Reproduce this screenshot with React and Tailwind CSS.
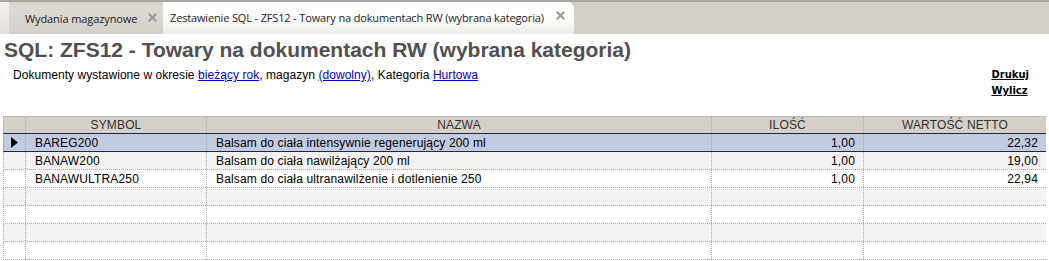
import React from "react";

const rows = [
  { s: "BAREG200", n: "Balsam do ciała intensywnie regenerujący 200 ml", q: "1,00", v: "22,32" },
  { s: "BANAW200", n: "Balsam do ciała nawilżający 200 ml", q: "1,00", v: "19,00" },
  { s: "BANAWULTRA250", n: "Balsam do ciała ultranawilżenie i dotlenienie 250", q: "1,00", v: "22,94" },
  null,
  null,
  null,
  null,
];

function Cell({ w, children, right, grow, className = "" }) {
  return (
    <div
      className={`h-full border-r border-dotted border-[#a8a8a8] flex items-center overflow-hidden whitespace-nowrap ${
        right ? "justify-end pr-[8px]" : "pl-[9px]"
      } ${grow ? "flex-1" : ""} ${className}`}
      style={w ? { width: w } : undefined}
    >
      {children}
    </div>
  );
}

function CloseX({ left }) {
  return (
    <svg className="absolute top-[9px]" style={{ left }} width="9" height="9" viewBox="0 0 9 9">
      <path d="M1.5 1.5 L7.5 7.5 M7.5 1.5 L1.5 7.5" stroke="#9a9a9a" strokeWidth="2" strokeLinecap="square" />
    </svg>
  );
}

export default function App() {
  return (
    <div className="w-[1049px] h-[261px] bg-white overflow-hidden relative">
      {/* Tab bar */}
      <div className="h-[34px] flex bg-[#d4d0c8] border-t-[2px] border-[#a9a7a2]" style={{ fontFamily: "'Open Sans', sans-serif" }}>
        <div className="w-[9px] bg-gradient-to-b from-[#f2f1ee] to-[#e4e2dd]" />
        <div className="w-[154px] mt-[2px] bg-gradient-to-b from-[#dedbd5] to-[#d3d0c9] flex items-center relative text-[11px] text-[#1e1e1e]">
          <span className="ml-[16px] tracking-[-0.1px]">Wydania magazynowe</span>
          <CloseX left={139} />
        </div>
        <div className="w-[411px] bg-gradient-to-b from-[#ffffff] via-[#fdfdfd] to-[#ecebe8] rounded-tr-[6px] flex items-center relative text-[11px] text-[#1e1e1e]">
          <span className="ml-[7px] tracking-[-0.15px]">Zestawienie SQL - ZFS12 - Towary na dokumentach RW (wybrana kategoria)</span>
          <CloseX left={393} />
        </div>
        <div className="flex-1 mt-[3px] bg-[#d4d0c8]" />
      </div>

      {/* Title */}
      <div className="pl-[4px] pt-[4px] text-[21px] leading-[24px] font-bold text-[#505050]" style={{ fontFamily: "'Liberation Sans', Arial, sans-serif" }}>
        SQL: ZFS12 - Towary na dokumentach RW (wybrana kategoria)
      </div>

      <div className="flex justify-between items-start mt-[6px]">
        <div className="pl-[13px] text-[12px] leading-[14px] text-black tracking-[0.05px]" style={{ fontFamily: "'Liberation Sans', Arial, sans-serif" }}>
          Dokumenty wystawione w okresie <span className="text-[#0000cc] underline">bieżący rok</span>, magazyn{" "}
          <span className="text-[#0000cc] underline">(dowolny)</span>, Kategoria <span className="text-[#0000cc] underline">Hurtowa</span>
        </div>
        <div className="pr-[20px] -mt-[1px] flex flex-col items-start text-[10px] leading-[16px] font-bold text-black" style={{ fontFamily: "'DejaVu Sans', Verdana, sans-serif" }}>
          <span className="underline">Drukuj</span>
          <span className="underline">Wylicz</span>
        </div>
      </div>

      {/* Grid */}
      <div className="absolute left-[3px] top-[116px] w-[1043px] text-[12px] text-black tracking-[0.15px]" style={{ fontFamily: "'Liberation Sans', Arial, sans-serif" }}>
        <div className="h-[17px] flex bg-[#d4d0c8] border-t border-l border-dotted border-[#a8a8a8] text-[#333]">
          <div className="w-[22px] h-full border-r border-dotted border-[#a8a8a8]" />
          <div className="w-[181px] h-full border-r border-dotted border-[#a8a8a8] flex items-center justify-center">SYMBOL</div>
          <div className="w-[505px] h-full border-r border-dotted border-[#a8a8a8] flex items-center justify-center">NAZWA</div>
          <div className="w-[152px] h-full border-r border-dotted border-[#a8a8a8] flex items-center justify-center">ILOŚĆ</div>
          <div className="flex-1 h-full flex items-center justify-center">WARTOŚĆ NETTO</div>
        </div>
        {rows.map((r, i) => {
          const selected = i === 0;
          const shaded = !selected && i % 2 === 1;
          return (
            <div
              key={i}
              className={`h-[18px] flex border-l border-dotted border-[#a8a8a8] ${
                selected
                  ? "bg-[#c3cbdf] border-y border-y-[#1c2852] border-solid h-[19px]"
                  : `border-b border-b-[#a8a8a8] ${shaded ? "bg-[#f4f3f1]" : "bg-white"}`
              }`}
            >
              <div className="w-[22px] h-full border-r border-dotted border-[#a8a8a8] flex items-center pl-[7px]">
                {selected && (
                  <svg width="7" height="11" viewBox="0 0 7 11">
                    <path d="M0 0 L7 5.5 L0 11 Z" fill="#000" />
                  </svg>
                )}
              </div>
              <Cell w={181}>{r ? r.s : ""}</Cell>
              <Cell w={505}>{r ? r.n : ""}</Cell>
              <Cell w={152} right>{r ? r.q : ""}</Cell>
              <Cell grow right className="border-r-0 pr-[4px]">{r ? r.v : ""}</Cell>
            </div>
          );
        })}
      </div>
    </div>
  );
}
